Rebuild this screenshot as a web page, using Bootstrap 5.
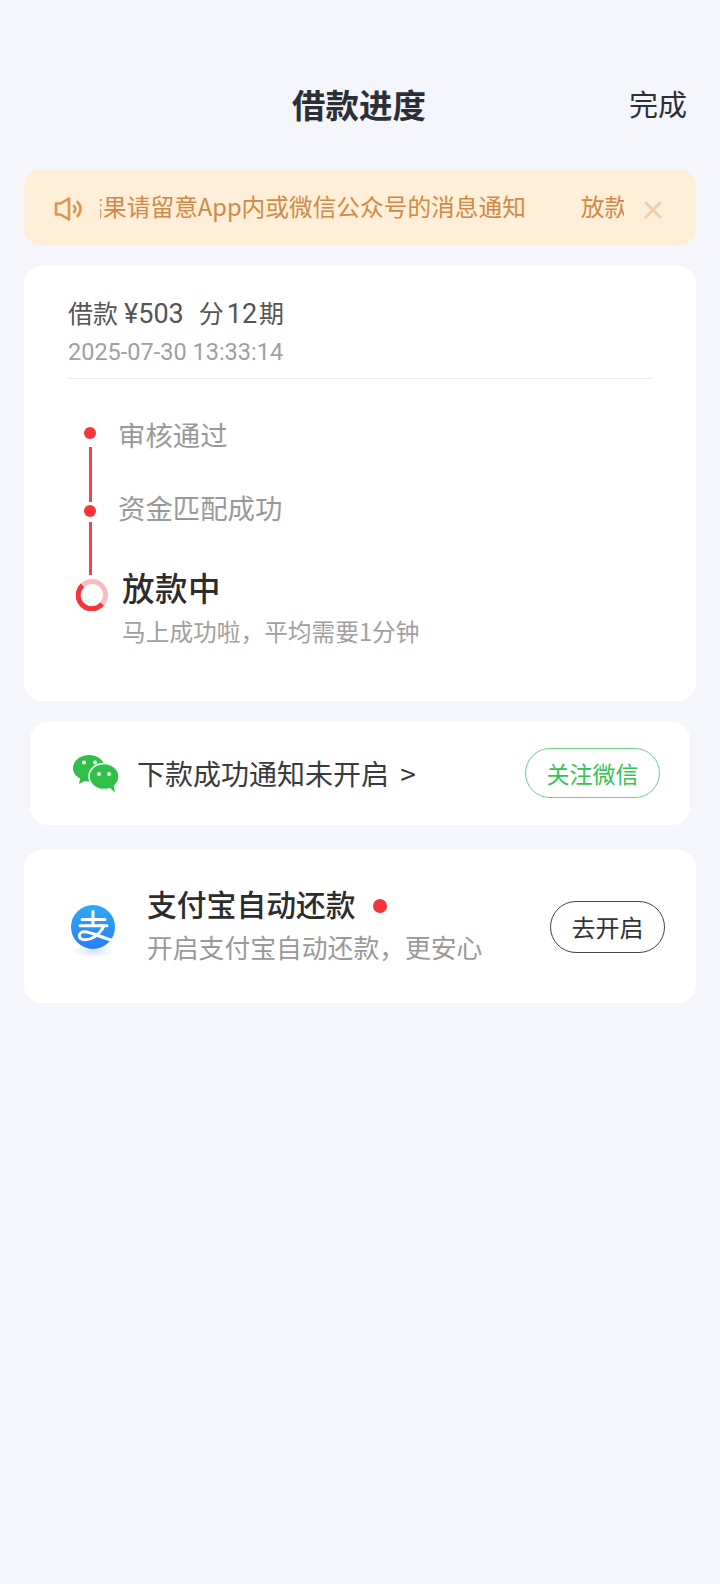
<!doctype html>
<html lang="zh-CN">
<head>
<meta charset="utf-8">
<title>借款进度</title>
<link href="https://cdn.jsdelivr.net/npm/bootstrap@5.3.0/dist/css/bootstrap.min.css" rel="stylesheet">
<style>
html,body{height:100%}
body{background:#f4f6fb;font-family:"Noto Sans CJK SC","Noto Sans",sans-serif;color:#333;width:720px}
.shell{padding:78px 24px 0}
.head-bar{display:grid;grid-template-columns:1fr auto 1fr;align-items:center;height:52px;padding:0 9px 0 7px}
.head-title{font-size:33.500px;font-weight:700;color:#2d2f36;line-height:50px;margin:0}
.head-done{font-size:29px;color:#2d2f36;line-height:50px;text-align:right;margin-bottom:2px}
.notice-bar{height:75px;margin-top:40px;background:#ffefd8;border-radius:16px;padding:0 24px 0 30px;color:#cf8a45}
.notice-icon{flex:none;margin-top:3px}
.notice-clip{width:524px;margin:0 0 3px 16px;overflow:hidden;font-size:23.700px;line-height:32px}
.notice-track{display:flex;gap:55px;white-space:nowrap;transform:translateX(-68px)}
.notice-x{margin:5px 0 0 20px;flex:none}
.sheet{background:#fff;border-radius:18px}
.sheet-main{margin-top:21px;height:435px;padding:28px 44px 0}
.loan-line{font-size:25px;line-height:36px;color:#555}
.loan-num{font-family:Roboto,sans-serif;font-size:27px}
.loan-sp{margin-left:6px}
.loan-fen{margin-left:15px}
.loan-qi{margin-left:2px}
.loan-num-b{margin-left:3px}
.loan-date{font-family:Roboto,sans-serif;font-size:23.500px;line-height:30px;color:#a0a0a0;margin-top:5px;padding-bottom:11px;border-bottom:1px solid #eee}
.timeline{margin-top:38px}
.rail{width:44px;padding-top:10px;flex:none}
.rail-dot{width:12px;height:12px;border-radius:50%;background:#f5343b}
.rail-line{width:3px;background:#f5434a}
.rail-a{height:55px;margin:8px 0 3px}
.rail-b{height:53px;margin:5px 0 4px}
.rail-ring{display:block;margin-left:4px}
.steps{padding-left:6px;margin-top:-1px}
.step-done{font-size:27.400px;line-height:36px;color:#999}
.step-two{margin:37px 0 0 0}
.step-now{font-size:32.500px;line-height:44px;letter-spacing:.5px;color:#2c2c2c;margin:40px 0 0 4px;font-weight:500}
.step-sub{font-size:23.700px;line-height:32px;color:#a0a0a0;margin:6px 0 0 4px}
.sheet-wx{margin:21px 6px 0;height:103px;padding:0 30px 2px 43px}
.wx-icon{flex:none;margin-top:2px}
.wx-text{font-size:28px;line-height:40px;color:#3a3a3a;margin-left:18px}
.wx-arrow{margin-left:5px}
.wx-btn{width:135px;height:50px;padding:0;border:1px solid #6fce87;border-radius:25px;color:#35c254;font-size:23px;background:#fff;line-height:46px}
.sheet-pay{margin-top:25px;height:153px;padding:0 31px 0 47px}
.pay-logo{width:44px;height:58px;flex:none;margin-top:14px}
.pay-body{margin-left:32px;margin-top:-4px}
.pay-title{font-size:29.800px;line-height:42px;font-weight:500;color:#2c2c2c;position:relative;top:-3px}
.pay-dot{width:14px;height:14px;border-radius:50%;background:#f5343b;margin:0 0 0 17px}
.pay-sub{font-size:25.800px;line-height:36px;color:#999;margin-top:2px}
.pay-btn{width:115px;height:52px;padding:0;border:1px solid #444;border-radius:26px;color:#333;font-size:24px;background:#fff;line-height:48px}
</style>
</head>
<body>
<main class="shell">
  <header class="head-bar">
    <span></span>
    <h1 class="head-title">借款进度</h1>
    <span class="head-done">完成</span>
  </header>

  <section class="notice-bar d-flex align-items-center">
    <svg class="notice-icon" width="30" height="24" viewBox="0 0 30 24" fill="none" stroke="#d9944e" stroke-width="2.600" stroke-linejoin="round" stroke-linecap="round">
      <path d="M2 6.500h4.500L15 1.500v21l-8.500-5H2z"/>
      <path d="M20 9a4 4 0 0 1 0 6"/>
      <path d="M23.500 5a10 10 0 0 1 3 7 10 10 0 0 1-3 7"/>
    </svg>
    <div class="notice-clip">
      <div class="notice-track"><span>放款结果请留意App内或微信公众号的消息通知</span><span>放款结果请留意App内或微信公众号的消息通知</span></div>
    </div>
    <svg class="notice-x" width="18" height="18" viewBox="0 0 18 18" fill="none" stroke="#efd0ae" stroke-width="3" stroke-linecap="round"><path d="M2 2l14 14M16 2L2 16"/></svg>
  </section>

  <section class="sheet sheet-main">
    <div class="loan-line">借款<span class="loan-num loan-sp">¥503</span><span class="loan-fen">分</span><span class="loan-num loan-num-b">12</span><span class="loan-qi">期</span></div>
    <div class="loan-date">2025-07-30 13:33:14</div>
    <div class="timeline d-flex align-items-start">
      <div class="rail d-flex flex-column align-items-center">
        <span class="rail-dot"></span>
        <span class="rail-line rail-a"></span>
        <span class="rail-dot"></span>
        <span class="rail-line rail-b"></span>
        <svg class="rail-ring" width="32" height="32" viewBox="0 0 32 32" fill="none" stroke-width="5">
          <circle cx="16" cy="16" r="13.500" stroke="#f9bcc0"/>
          <path d="M6.500 6.400A13.500 13.500 0 1 0 26 25" stroke="#f5343b"/>
        </svg>
      </div>
      <div class="steps">
        <div class="step-done">审核通过</div>
        <div class="step-done step-two">资金匹配成功</div>
        <div class="step-now">放款中</div>
        <div class="step-sub">马上成功啦，平均需要1分钟</div>
      </div>
    </div>
  </section>

  <section class="sheet sheet-wx d-flex align-items-center">
    <svg class="wx-icon" width="46" height="38" viewBox="0 0 46 38">
      <path fill="#2fc04a" d="M16 0c8.800 0 16 5.900 16 13.200S24.800 26.400 16 26.400c-1.500 0-3-.2-4.400-.5L6 29l1.200-5.400C2.800 21.200 0 17.500 0 13.200 0 5.900 7.200 0 16 0z"/>
      <ellipse cx="31" cy="21.500" rx="15" ry="13" fill="#2fc04a" stroke="#fff" stroke-width="1.500"/>
      <path fill="#2fc04a" d="M36 32l6 5.500-1.300-8z"/>
      <circle cx="11" cy="7.500" r="2" fill="#fff"/><circle cx="22" cy="7.500" r="2" fill="#fff"/>
      <circle cx="26" cy="19" r="2" fill="#fff"/><circle cx="36" cy="19" r="2" fill="#fff"/>
    </svg>
    <span class="wx-text">下款成功通知未开启<span class="wx-arrow"> &gt;</span></span>
    <button type="button" class="btn wx-btn ms-auto">关注微信</button>
  </section>

  <section class="sheet sheet-pay d-flex align-items-center">
    <svg class="pay-logo" viewBox="0 0 44 58" fill="none">
      <defs>
        <linearGradient id="payg" x1="0" y1="0" x2="0" y2="1"><stop offset="0" stop-color="#2fa9f4"/><stop offset="1" stop-color="#2c7df6"/></linearGradient>
        <radialGradient id="pays" cx=".5" cy=".5" r=".5"><stop offset="0" stop-color="#d3e4fc"/><stop offset="1" stop-color="#fff"/></radialGradient>
      </defs>
      <ellipse cx="22" cy="46" rx="21" ry="6.500" fill="url(#pays)"/>
      <circle cx="22" cy="22" r="22" fill="url(#payg)"/>
      <path d="M11 14.500H34M22 6.500v14M9 20.800H36M33 20.800C28.500 30 20 35.500 13 34.800 6.500 34 7 26.500 13.500 26.800 21 27.200 31 33 42.500 35.500" stroke="#fff" stroke-width="3" stroke-linecap="round"/>
    </svg>
    <div class="pay-body">
      <div class="d-flex align-items-center"><span class="pay-title">支付宝自动还款</span><span class="pay-dot"></span></div>
      <div class="pay-sub">开启支付宝自动还款，更安心</div>
    </div>
    <button type="button" class="btn pay-btn ms-auto">去开启</button>
  </section>
</main>
<script src="https://cdn.jsdelivr.net/npm/bootstrap@5.3.0/dist/js/bootstrap.bundle.min.js"></script>
</body>
</html>
